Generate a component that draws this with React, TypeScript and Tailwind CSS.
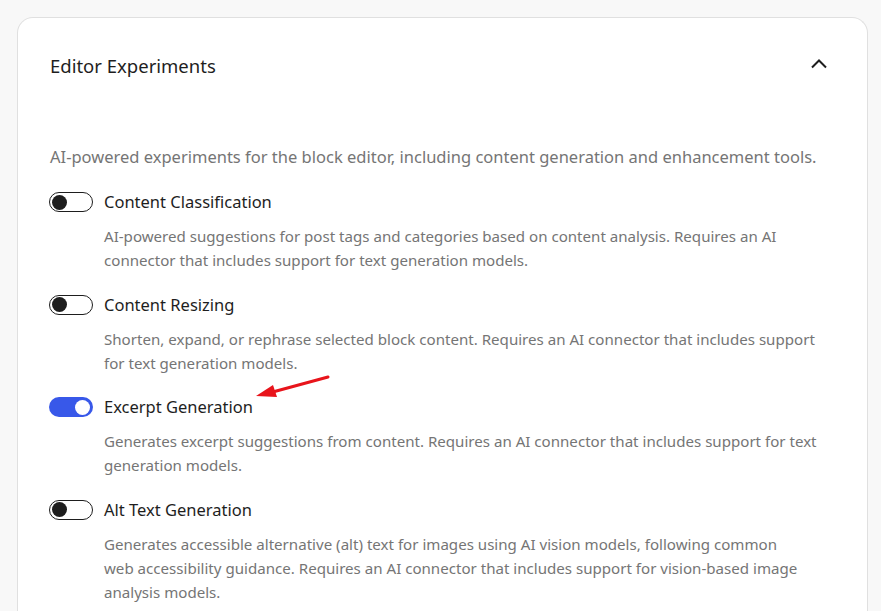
const ITEMS = [
  {
    label: "Content Classification",
    help: [
      "AI-powered suggestions for post tags and categories based on content analysis. Requires an AI",
      "connector that includes support for text generation models.",
    ],
    on: false,
  },
  {
    label: "Content Resizing",
    help: [
      "Shorten, expand, or rephrase selected block content. Requires an AI connector that includes support",
      "for text generation models.",
    ],
    on: false,
  },
  {
    label: "Excerpt Generation",
    help: [
      "Generates excerpt suggestions from content. Requires an AI connector that includes support for text",
      "generation models.",
    ],
    on: true,
  },
  {
    label: "Alt Text Generation",
    help: [
      "Generates accessible alternative (alt) text for images using AI vision models, following common",
      "web accessibility guidance. Requires an AI connector that includes support for vision-based image",
      "analysis models.",
    ],
    on: false,
  },
];

function Toggle({ on }: { on: boolean }) {
  return (
    <span
      className={
        on
          ? "ml-[-1px] flex h-[20px] w-[44px] shrink-0 items-center justify-end rounded-full bg-[#3858e9] px-[3px]"
          : "ml-[-1px] flex h-[20px] w-[44px] shrink-0 items-center rounded-full border border-[#1e1e1e] bg-white px-[2px]"
      }
    >
      <span className={on ? "size-[15px] rounded-full bg-white" : "size-[15px] rounded-full bg-[#1e1e1e]"} />
    </span>
  );
}

export default function App() {
  return (
    <div className="h-[611px] overflow-hidden bg-[#f8f8f8] pl-[17px] pr-[13px] pt-[17px] font-['Noto_Sans',sans-serif]">
      <div className="relative rounded-t-[16px] border border-b-0 border-[#e0e0e0] bg-white px-[32px] pb-10">
        <div className="flex h-[96px] items-center justify-between">
          <h2 className="text-[18.5px] text-[#1e1e1e]">Editor Experiments</h2>
          <svg className="mr-[4px] mt-[-5px]" width="24" height="24" viewBox="0 0 24 24" fill="none">
            <polyline points="5,15.5 12,8.5 19,15.5" stroke="#1e1e1e" strokeWidth="2" />
          </svg>
        </div>

        <p className="mt-[31px] text-[16.5px] leading-[24px] text-[#757575]">
          AI-powered experiments for the block editor, including content generation and enhancement tools.
        </p>

        <div className="mt-[21px] flex flex-col gap-[20.5px]">
          {ITEMS.map((item) => (
            <div key={item.label}>
              <div className="flex items-center gap-[11px]">
                <Toggle on={item.on} />
                <span className="text-[16.5px] leading-[24px] text-[#1e1e1e]">{item.label}</span>
              </div>
              <p className="mt-[10px] pl-[54px] text-[15.1px] leading-[24px] text-[#757575]">
                {item.help.map((line) => (
                  <span key={line} className="block whitespace-nowrap">
                    {line}
                  </span>
                ))}
              </p>
            </div>
          ))}
        </div>

        <svg className="pointer-events-none absolute left-[235px] top-[356px]" width="80" height="26" viewBox="0 0 80 26">
          <line x1="75" y1="3" x2="16" y2="19" stroke="#e8141b" strokeWidth="3" strokeLinecap="round" />
          <polygon points="3,22 20,11 24,23" fill="#e8141b" />
        </svg>
      </div>
    </div>
  );
}
